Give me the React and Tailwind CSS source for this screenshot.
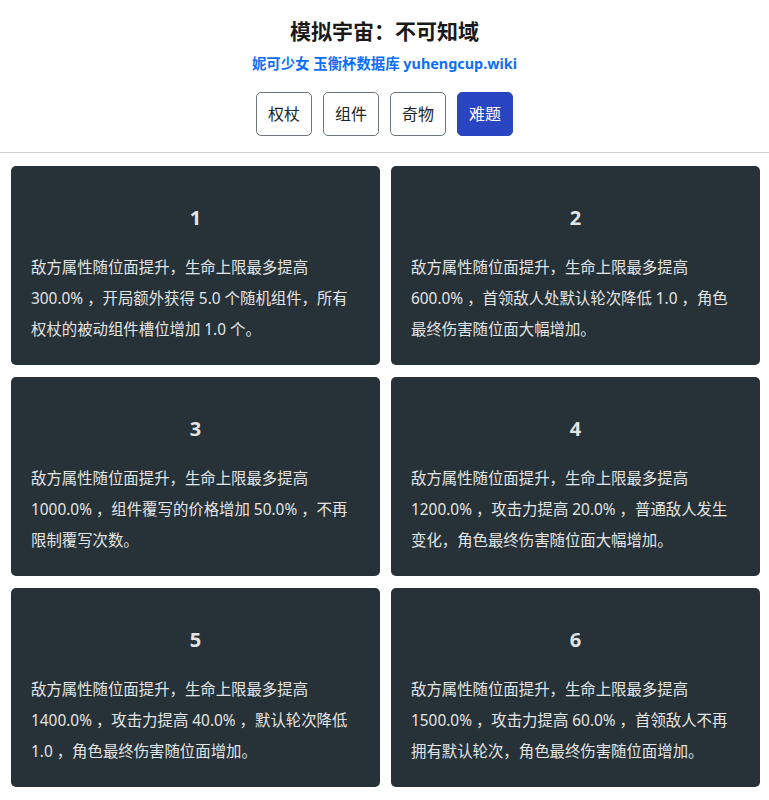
import React from "react";

const cards = [
  { n: "1", t: "敌方属性随位面提升，生命上限最多提高 300.0% ，开局额外获得 5.0 个随机组件，所有权杖的被动组件槽位增加 1.0 个。" },
  { n: "2", t: "敌方属性随位面提升，生命上限最多提高 600.0% ，首领敌人处默认轮次降低 1.0 ，角色最终伤害随位面大幅增加。" },
  { n: "3", t: "敌方属性随位面提升，生命上限最多提高 1000.0% ，组件覆写的价格增加 50.0% ，不再限制覆写次数。" },
  { n: "4", t: "敌方属性随位面提升，生命上限最多提高 1200.0% ，攻击力提高 20.0% ，普通敌人发生变化，角色最终伤害随位面大幅增加。" },
  { n: "5", t: "敌方属性随位面提升，生命上限最多提高 1400.0% ，攻击力提高 40.0% ，默认轮次降低 1.0 ，角色最终伤害随位面增加。" },
  { n: "6", t: "敌方属性随位面提升，生命上限最多提高 1500.0% ，攻击力提高 60.0% ，首领敌人不再拥有默认轮次，角色最终伤害随位面增加。" },
];

const tabs = ["权杖", "组件", "奇物", "难题"];

export default function App() {
  return (
    <div
      className="w-[769px] min-h-[800px] bg-white"
      style={{ fontFamily: '"Noto Sans", "Noto Sans CJK SC", sans-serif' }}
    >
      <div className="flex flex-col items-center pt-[16px]">
        <h1 className="text-[21px] font-bold leading-[30px] text-[#1a1a1a]">模拟宇宙：不可知域</h1>
        <a className="mt-[8px] text-[14.4px] font-bold leading-[20px] text-[#0d6efd]">
          妮可少女 玉衡杯数据库 yuhengcup.wiki
        </a>
        <div className="mt-[18px] flex gap-[11px]">
          {tabs.map((t, i) => (
            <button
              key={t}
              className={
                i === 3
                  ? "h-[44px] px-[11px] rounded-[5px] border border-[#2a45c2] bg-[#2a45c2] text-white text-[16px]"
                  : "h-[44px] px-[11px] rounded-[5px] border border-[#6c757d] bg-white text-[#212529] text-[16px]"
              }
            >
              {t}
            </button>
          ))}
        </div>
      </div>
      <div className="mt-[16px] border-t border-[#d0d0d0]" />
      <div className="grid grid-cols-2 gap-x-[11px] gap-y-[12px] pl-[11px] pr-[9px] pt-[13px] pb-[14px]">
        {cards.map((c) => (
          <div key={c.n} className="h-[199px] rounded-[5px] bg-[#263238] px-[20px] text-[#e4e4e4]">
            <div className="mt-[38px] text-center text-[20px] font-bold leading-[27px]">{c.n}</div>
            <p className="mt-[21px] text-[15.4px] leading-[31px]">{c.t}</p>
          </div>
        ))}
      </div>
    </div>
  );
}
